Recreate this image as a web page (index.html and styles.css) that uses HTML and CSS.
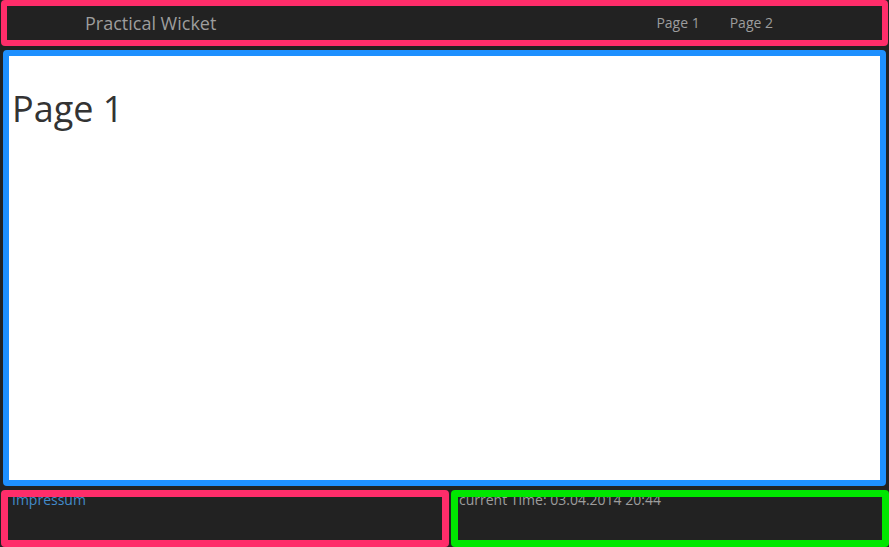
FILE: index.html
```html
<!DOCTYPE html>
<html>
<head>
<meta charset="utf-8">
<title>Practical Wicket</title>
<link rel="stylesheet" href="styles.css">
</head>
<body>
  <header class="navbar">
    <a class="brand" href="#">Practical Wicket</a>
    <nav class="nav-links">
      <a href="#">Page 1</a>
      <a href="#">Page 2</a>
    </nav>
  </header>
  <main class="content">
    <h1>Page 1</h1>
  </main>
  <footer class="footer">
    <div class="panel panel-left"><a href="#">Impressum</a></div>
    <div class="panel panel-right">current Time: 03.04.2014 20:44</div>
  </footer>
</body>
</html>
```
FILE: styles.css
```css
html, body {
  margin: 0;
  padding: 0;
}
body {
  background: #222222;
  font-family: "Open Sans", "Noto Sans", sans-serif;
  font-size: 14px;
  line-height: 20px;
  color: #333;
  width: 889px;
  height: 547px;
  overflow: hidden;
  display: flex;
  flex-direction: column;
}
.navbar {
  box-sizing: border-box;
  height: 46px;
  margin: 0 1px 0 1px;
  border: 6px solid #ff2d6a;
  border-radius: 4px;
  background: #222222;
  display: flex;
  align-items: center;
  justify-content: space-between;
}
.brand {
  margin-left: 78px;
  font-size: 18px;
  color: #9d9d9d;
  text-decoration: none;
}
.nav-links {
  display: flex;
  margin-right: 94px;
}
.nav-links a {
  color: #9d9d9d;
  text-decoration: none;
  padding: 0 15px;
  font-size: 14px;
}
.content {
  box-sizing: border-box;
  height: 436px;
  margin: 4px 3px 0 3px;
  border: 6px solid #1e90ff;
  border-radius: 4px;
  background: #ffffff;
  padding: 0 3px;
}
.content h1 {
  margin: 33px 0 0 0;
  font-size: 36px;
  font-weight: 400;
  line-height: 40px;
  color: #333;
}
.footer {
  display: flex;
  gap: 2px;
  height: 57px;
  margin: 4px 0 0 1px;
}
.panel {
  position: relative;
  box-sizing: border-box;
  background: #222222;
}
.panel::after {
  content: "";
  position: absolute;
  inset: 0;
  border-radius: 4px;
  border: 7px solid;
}
.panel-left {
  width: 448px;
  padding-left: 11px;
}
.panel-left::after {
  border-color: #ff2d6a;
}
.panel-left a {
  color: #428bca;
  text-decoration: none;
}
.panel-right {
  width: 438px;
  padding-left: 8px;
  color: #9d9d9d;
}
.panel-right::after {
  border-color: #00e600;
}
```
